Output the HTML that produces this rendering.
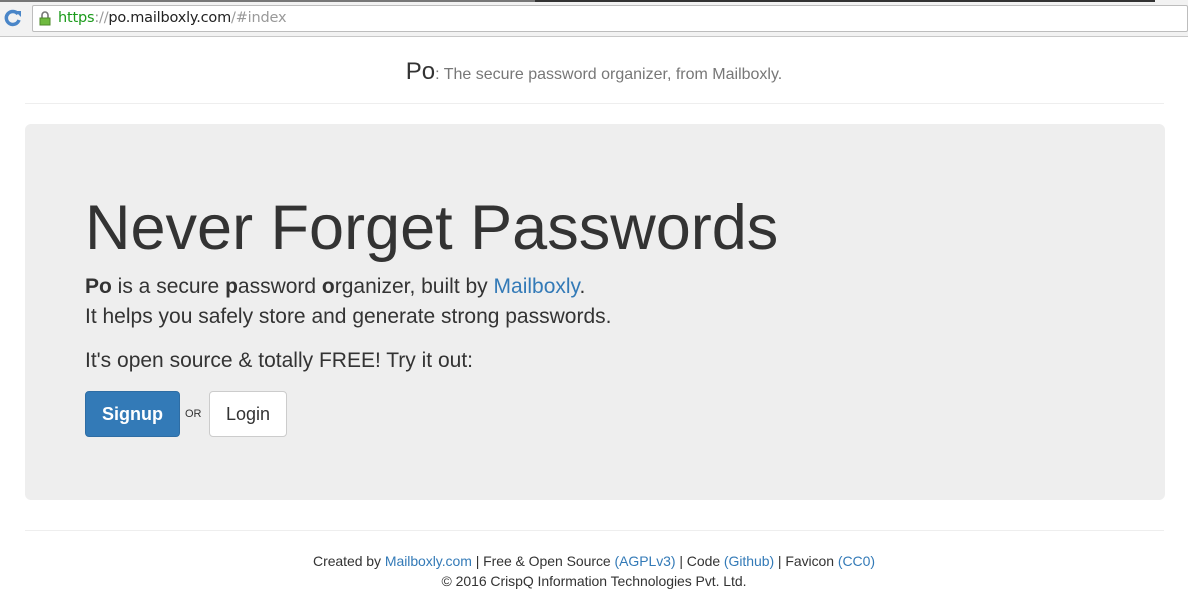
<!DOCTYPE html>
<html><head><meta charset="utf-8"><style>
*{margin:0;padding:0;box-sizing:border-box}
body{width:1188px;height:609px;overflow:hidden;background:#fff;font-family:"Liberation Sans",sans-serif;color:#333;position:relative}
.bar{position:absolute;left:0;top:0;width:1188px;height:37px;background:#f2f2f2;border-bottom:1px solid #c8c8c8}
.bar .tabline{position:absolute;top:0;left:0;width:535px;height:2px;background:#777}
.bar .tabline2{position:absolute;top:0;left:535px;width:620px;height:2px;background:#333}
.url{position:absolute;left:32px;top:5px;width:1156px;height:27px;background:#fff;border:1px solid #bdbdbd;border-radius:2px;font-family:"DejaVu Sans",sans-serif;font-size:14.5px;line-height:25px;padding-left:25px;color:#222;letter-spacing:-0.2px}
.a{position:absolute}
.hd{left:0;width:1188px;top:58px;text-align:center;font-size:16px;color:#777}
.hd b{font-weight:normal;font-size:24px;color:#333}
.hr{left:25px;width:1139px;height:1px;background:#eee}
.jb{left:25px;top:124px;width:1140px;height:376px;background:#eee;border-radius:6px}
h1{position:absolute;left:85px;top:188px;font-size:63px;font-weight:normal;line-height:80px;color:#333}
.p{left:85px;font-size:21px;line-height:30px}
a{color:#337ab7;text-decoration:none}
.btn{position:absolute;top:391px;height:46px;border-radius:4px;font-size:18px;line-height:44px;text-align:center}
.ft{left:0;width:1188px;text-align:center;font-size:14px;line-height:20px}
</style></head><body>
<div class="bar"><div class="tabline"></div><div class="tabline2"></div>
<svg class="a" style="left:4px;top:9px" width="18" height="18" viewBox="0 0 18 18"><path d="M14 5A6.5 6.5 0 1 0 15 11" fill="none" stroke="#4a86c8" stroke-width="3.5"/><path d="M11 2h6v6z" fill="#4a86c8"/></svg>
<div class="url"><svg class="a" style="left:6px;top:5px" width="12" height="15" viewBox="0 0 12 15"><path d="M3 7V4a3 3 0 0 1 6 0v3" fill="none" stroke="#777" stroke-width="1.6"/><rect x="1" y="7" width="10" height="7" fill="#6fba3f" stroke="#4d8a2a"/></svg><span style="color:#1a9a1a">https</span><span style="color:#999">://</span>po.mailboxly.com<span style="color:#999">/#index</span></div></div>
<div class="a hd"><b>Po</b>: The secure password organizer, from Mailboxly.</div>
<div class="a hr" style="top:103px"></div>
<div class="a jb"></div>
<h1>Never Forget Passwords</h1>
<div class="a p" style="top:272px"><b>Po</b> is a secure <b>p</b>assword <b>o</b>rganizer, built by <a>Mailboxly</a>.<br>It helps you safely store and generate strong passwords.</div>
<div class="a p" style="top:346px">It's open source &amp; totally FREE! Try it out:</div>
<div class="btn" style="left:85px;width:95px;background:#337ab7;border:1px solid #2e6da4;color:#fff;font-weight:bold">Signup</div>
<div class="a" style="left:185px;top:408px;font-size:11px">OR</div>
<div class="btn" style="left:209px;width:78px;background:#fff;border:1px solid #ccc">Login</div>
<div class="a hr" style="top:530px"></div>
<div class="a ft" style="top:551px;letter-spacing:-0.05px">Created by <a>Mailboxly.com</a> | Free &amp; Open Source <a>(AGPLv3)</a> | Code <a>(Github)</a> | Favicon <a>(CC0)</a><br>© 2016 CrispQ Information Technologies Pvt. Ltd.</div>
</body></html>
